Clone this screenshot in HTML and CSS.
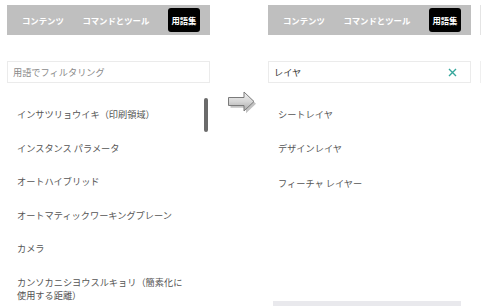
FILE: index.html
```html
<!DOCTYPE html>
<html>
<head>
    <title>用語集</title>
    <link rel="stylesheet" href="styles.css">
</head>
<body>
    <div id="stage">
        <div class="panel">
            <div class="tabs">
                <span class="tab">コンテンツ</span>
                <span class="tab">コマンドとツール</span>
                <span class="tab active">用語集</span>
            </div>
            <div class="filter">
                <span class="placeholder">用語でフィルタリング</span>
            </div>
            <div class="term-list">
                <div class="term">インサツリョウイキ（印刷領域）</div>
                <div class="term">インスタンス パラメータ</div>
                <div class="term">オートハイブリッド</div>
                <div class="term">オートマティックワーキングプレーン</div>
                <div class="term">カメラ</div>
                <div class="term">カンソカニシヨウスルキョリ（簡素化に使用する距離）</div>
                <div class="scroll-thumb"></div>
            </div>
        </div>

        <div class="arrow-col">
            <svg width="30" height="24" viewBox="0 0 30 24">
                <defs>
                    <linearGradient id="arrowFill" x1="0" y1="0" x2="0" y2="1">
                        <stop offset="0" stop-color="#f2f2f2"/>
                        <stop offset="0.5" stop-color="#d6d6d6"/>
                        <stop offset="1" stop-color="#a8a8a8"/>
                    </linearGradient>
                </defs>
                <path d="M2.5 7.5 H18 V2 L28 11.5 L18 21 V15.5 H2.5 Z" fill="#9a9a9a" transform="translate(1,1.2)" opacity="0.6"/>
                <path d="M1.5 6.5 H17 V1 L27 10.5 L17 20 V14.5 H1.5 Z" fill="url(#arrowFill)" stroke="#7a7a7a" stroke-width="1"/>
            </svg>
        </div>

        <div class="panel">
            <div class="tabs">
                <span class="tab">コンテンツ</span>
                <span class="tab">コマンドとツール</span>
                <span class="tab active">用語集</span>
            </div>
            <div class="filter">
                <span class="query">レイヤ</span>
                <svg class="clear" width="9" height="9" viewBox="0 0 9 9">
                    <path d="M1 1 L8 8 M8 1 L1 8" stroke="#35a79c" stroke-width="1.4"/>
                </svg>
            </div>
            <div class="term-list">
                <div class="term">シートレイヤ</div>
                <div class="term">デザインレイヤ</div>
                <div class="term">フィーチャ レイヤー</div>
            </div>
            <div class="footer-bar"></div>
        </div>

        <div class="peek">
            <div class="peek-bar"></div>
            <div class="peek-field"></div>
        </div>
    </div>
</body>
</html>
```

FILE: styles.css
```css
body {
    margin: 0;
    overflow: hidden;
    background: #fff;
    font-family: "Noto Sans CJK JP", "Noto Sans", sans-serif;
}
#stage {
    display: flex;
    align-items: flex-start;
    padding: 5px 0 0 7px;
    width: 481px;
    box-sizing: border-box;
}
.panel {
    width: 203px;
    flex: none;
    display: flex;
    flex-direction: column;
}
.tabs {
    height: 30px;
    background: #bfbfbf;
    display: flex;
    align-items: center;
    justify-content: space-between;
    padding: 0 10px 0 15px;
    box-sizing: border-box;
}
.tab {
    color: #fff;
    font-size: 8.4px;
    font-weight: bold;
    line-height: 24px;
    white-space: nowrap;
}
.tab.active {
    background: #000;
    border-radius: 3px;
    padding: 0 3.5px;
}
.filter {
    margin-top: 26px;
    height: 22px;
    border: 1px solid #ebebeb;
    box-sizing: border-box;
    display: flex;
    align-items: center;
    justify-content: space-between;
    padding: 0 13px 0 5px;
    font-size: 9.2px;
}
.placeholder { color: #8a8a8a; }
.query { color: #333; }
.clear { display: block; }
.term-list {
    position: relative;
    margin-top: 15px;
}
.term {
    padding: 10px 20px 10px 10px;
    font-size: 9.2px;
    line-height: 13.5px;
    color: #555;
}
.term-list .term:last-of-type {
    line-height: 14px;
    padding-top: 11px;
}
.scroll-thumb {
    position: absolute;
    top: 0;
    right: 2px;
    width: 4px;
    height: 34px;
    border-radius: 2px;
    background: #6b6b6b;
}
.arrow-col {
    width: 58px;
    flex: none;
    padding: 86px 0 0 17px;
    box-sizing: border-box;
}
.arrow-col svg { display: block; }
.footer-bar {
    margin: 101px 10px 0 5px;
    height: 10px;
    background: #e9e9ed;
}
.peek {
    width: 1px;
    flex: none;
    margin-left: 9px;
}
.peek-bar {
    height: 30px;
    background: #e4e4e4;
}
.peek-field {
    margin-top: 26px;
    height: 22px;
    background: #efefef;
}
```
